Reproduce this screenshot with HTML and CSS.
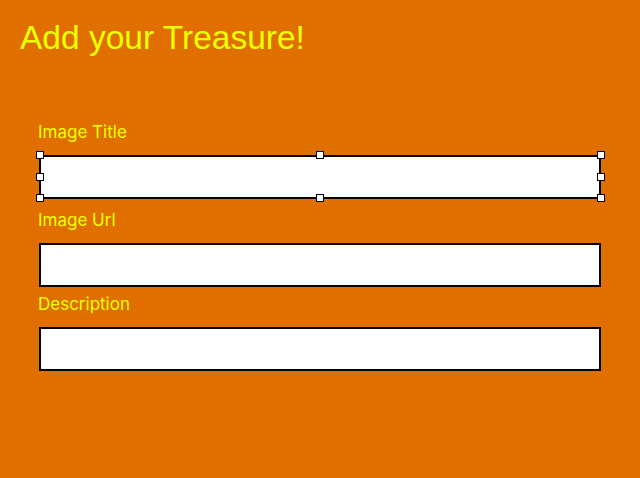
FILE: index.html
```html
<!DOCTYPE html>
<html>
<head>
<meta charset="utf-8">
<link rel="stylesheet" href="styles.css">
</head>
<body>
<h1 class="title">Add your Treasure!</h1>
<form class="form">
  <div class="field">
    <label class="label">Image Title</label>
    <div class="selected">
      <input class="input" type="text">
      <span class="handle h-tl"></span>
      <span class="handle h-tc"></span>
      <span class="handle h-tr"></span>
      <span class="handle h-ml"></span>
      <span class="handle h-mr"></span>
      <span class="handle h-bl"></span>
      <span class="handle h-bc"></span>
      <span class="handle h-br"></span>
    </div>
  </div>
  <div class="field field-url">
    <label class="label">Image Url</label>
    <input class="input" type="text">
  </div>
  <div class="field field-desc">
    <label class="label">Description</label>
    <input class="input" type="text">
  </div>
</form>
</body>
</html>
```

FILE: styles.css
```css
html, body {
  margin: 0;
  padding: 0;
  background: #e06f00;
  height: 100%;
}
body {
  font-family: Inter, "Liberation Sans", sans-serif;
  color: #e8ff00;
}
.title {
  margin: 0;
  padding: 18px 0 0 20px;
  font-size: 33.5px;
  font-weight: 400;
  line-height: 40px;
  font-family: "Liberation Sans", sans-serif;
}
.form {
  display: flex;
  flex-direction: column;
  padding: 64px 39px 0 39px;
}
.field {
  display: flex;
  flex-direction: column;
}
.field-url {
  margin-top: 11px;
}
.field-desc {
  margin-top: 7px;
}
.label {
  display: block;
  font-size: 17px;
  line-height: 21px;
  margin: 0 0 12px -1px;
}
.selected {
  position: relative;
}
.input {
  display: block;
  box-sizing: border-box;
  width: 100%;
  height: 44px;
  margin: 0;
  border: 2px solid #000;
  background: #fff;
  outline: none;
  padding: 0 8px;
}
.handle {
  position: absolute;
  width: 8px;
  height: 8px;
  box-sizing: border-box;
  background: #fff;
  border: 1px solid #000;
}
.h-tl { left: -3px; top: -4px; }
.h-tc { left: calc(50% - 4px); top: -4px; }
.h-tr { right: -4px; top: -4px; }
.h-ml { left: -3px; top: calc(50% - 4px); }
.h-mr { right: -4px; top: calc(50% - 4px); }
.h-bl { left: -3px; bottom: -3px; }
.h-bc { left: calc(50% - 4px); bottom: -3px; }
.h-br { right: -4px; bottom: -3px; }
```
